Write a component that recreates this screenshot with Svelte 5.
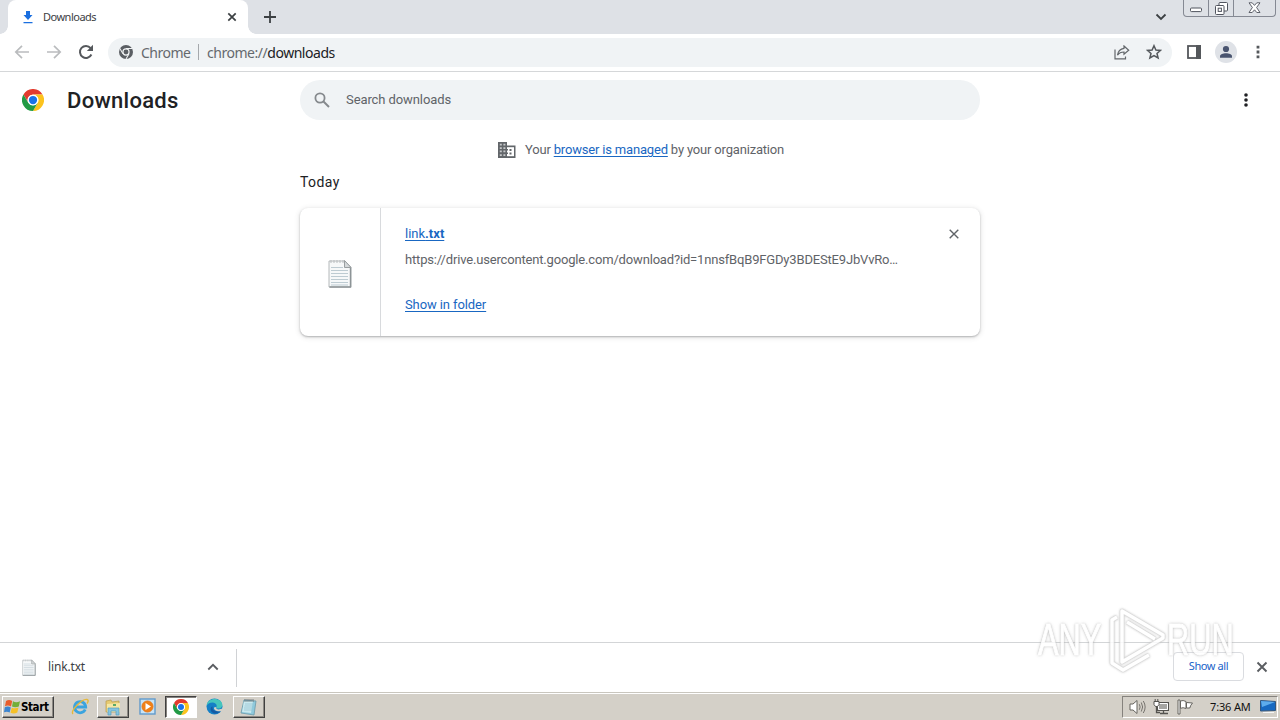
<script>
  const url = 'https://drive.usercontent.google.com/download?id=1nnsfBqB9FGDy3BDEStE9JbVvRo…';
</script>

{#snippet chrome(size)}
  <svg width={size} height={size} viewBox="0 0 48 48">
    <circle cx="24" cy="24" r="24" fill="#fff" />
    <path d="M3.2 12A24 24 0 0 1 44.8 12L24 12A12 12 0 0 0 13.6 30Z" fill="#e33b2e" />
    <path d="M44.8 12A24 24 0 0 1 24 48L34.4 30A12 12 0 0 0 24 12Z" fill="#fcc31e" />
    <path d="M3.2 12A24 24 0 0 0 24 48L34.4 30A12 12 0 0 1 13.6 30Z" fill="#229a45" />
    <circle cx="24" cy="24" r="11.5" fill="#fff" />
    <circle cx="24" cy="24" r="9" fill="#1a73e8" />
  </svg>
{/snippet}

{#snippet note(w, h)}
  <svg width={w} height={h} viewBox="0 0 24 29">
    <path d="M1 2H17L23 8V28H1Z" fill="#f6f8f9" stroke="#b4b8ba" />
    <path d="M22.5 9V28H1.5" fill="none" stroke="#8d9497" stroke-width="1.4" />
    <path d="M16.5 1.5V8.5H23Z" fill="#d4d8da" stroke="#999ea0" />
    <path d="M3 1V4M6 1V4M9 1V4M12 1V4M15 1V4" stroke="#b9bdc0" />
    <path d="M3 8.5H15M3 11.5H20M3 14.5H20M3 17.5H20M3 20.5H20M3 23.5H20M3 26H20" stroke="#bdcbd2" />
  </svg>
{/snippet}

<div class="screen">
  <div class="tabs">
    <div class="tab">
      <svg class="dl" width="12" height="13" viewBox="0 0 12 13"><path d="M4 0H8V4H10.5L6 9L1.5 4H4ZM1.5 11H10.5V12.3H1.5Z" fill="#1a6fe0" /></svg>
      <span class="tabname">Downloads</span>
      <svg width="10" height="10" viewBox="0 0 10 10"><path d="M1.3 1.3L8.7 8.7M8.7 1.3L1.3 8.7" stroke="#3c4043" stroke-width="1.7" /></svg>
    </div>
    <svg class="plus" width="12" height="12" viewBox="0 0 12 12"><path d="M6 0V12M0 6H12" stroke="#3c4043" stroke-width="1.8" /></svg>
    <svg class="drop" width="12" height="8" viewBox="0 0 12 8"><path d="M1.5 1.5L6 6L10.5 1.5" fill="none" stroke="#3c4043" stroke-width="1.8" /></svg>
    <div class="window">
      <span><svg width="12" height="6" viewBox="0 0 12 6"><rect x=".5" y="1" width="11" height="3.6" rx="1" fill="#fff" stroke="#50545e" /></svg></span>
      <span><svg width="13" height="13" viewBox="0 0 13 13"><rect x="4" y=".5" width="8.5" height="8.5" rx="1" fill="#fff" stroke="#50545e" /><rect x=".5" y="3.5" width="8.5" height="9" rx="1" fill="#fff" stroke="#50545e" /><rect x="3.2" y="6.2" width="3.2" height="3.2" fill="#fff" stroke="#50545e" /></svg></span>
      <span><svg width="13" height="12" viewBox="0 0 13 12"><path d="M1 .8H4.2L6.5 3.4L8.8 .8H12L8.6 5.5L12 10.5H8.8L6.5 7.8L4.2 10.5H1L4.4 5.5Z" fill="#fff" stroke="#50545e" stroke-width=".9" /></svg></span>
    </div>
  </div>

  <div class="toolbar">
    <svg class="back" width="16" height="16" viewBox="0 0 16 16"><path d="M15 8H2M8 1.8L1.8 8L8 14.2" fill="none" stroke="#babcbe" stroke-width="1.7" /></svg>
    <svg class="fwd" width="16" height="16" viewBox="0 0 16 16"><path d="M1 8H14M8 1.8L14.2 8L8 14.2" fill="none" stroke="#babcbe" stroke-width="1.7" /></svg>
    <svg class="reload" width="16" height="16" viewBox="0 0 16 16"><path d="M13.4 10.5A6 6 0 1 1 12.6 4.1" fill="none" stroke="#55585c" stroke-width="2" /><path d="M15 .8V7H8.8Z" fill="#55585c" /></svg>
    <div class="omni">
      <svg width="14" height="14" viewBox="0 0 48 48"><circle cx="24" cy="24" r="24" fill="#5a5e63" /><circle cx="24" cy="24" r="10.5" fill="none" stroke="#f1f3f4" stroke-width="4" /><path d="M24 12H46M13.6 30L3 12M34.4 30L24 48" stroke="#f1f3f4" stroke-width="3.5" /></svg>
      <span class="site">Chrome</span>
      <i></i>
      <span class="addr">chrome://<b>downloads</b></span>
      <svg class="share" width="16" height="15" viewBox="0 0 16 15"><path d="M1 4.5V13.8H11.5V11.5M10 1L14.7 5.2L10 9.3V7C7 7 5 8 3.5 10.2C4 6.5 6 3.8 10 3.3Z" fill="none" stroke="#62666a" stroke-width="1.2" /></svg>
      <svg width="16" height="16" viewBox="0 0 16 16"><path d="M8 1.7L9.9 6L14.5 6.4L11 9.5L12.1 14L8 11.6L3.9 14L5 9.5L1.5 6.4L6.1 6Z" fill="none" stroke="#54585c" stroke-width="1.5" /></svg>
    </div>
    <svg class="panel" width="14" height="14" viewBox="0 0 14 14"><rect x="1" y="1" width="12" height="12" fill="#fff" stroke="#54575b" stroke-width="1.8" /><path d="M9 0H14V14H9Z" fill="#54575b" /></svg>
    <svg class="avatar" width="22" height="22" viewBox="0 0 22 22"><circle cx="11" cy="11" r="11" fill="#dfe2e7" /><circle cx="11" cy="8" r="3.1" fill="#49546f" /><path d="M5 16.7V15.2C5 11.3 17 11.3 17 15.2V16.7Z" fill="#49546f" /></svg>
    <svg width="4" height="14" viewBox="0 0 4 14"><path d="M.6 .8h2.8v2.8H.6ZM.6 5.6h2.8v2.8H.6ZM.6 10.4h2.8v2.8H.6Z" fill="#55585c" /></svg>
  </div>

  <main>
    <header>
      {@render chrome(22)}
      <h1>Downloads</h1>
      <div class="search">
        <svg width="16" height="16" viewBox="0 0 16 16"><circle cx="6" cy="6" r="4.6" fill="none" stroke="#85898d" stroke-width="1.8" /><path d="M9.5 9.5L15 15" stroke="#85898d" stroke-width="2" /></svg>
        <span>Search downloads</span>
      </div>
      <svg class="more" width="4" height="14" viewBox="0 0 4 14"><circle cx="2" cy="2" r="1.8" /><circle cx="2" cy="7" r="1.8" /><circle cx="2" cy="12" r="1.8" /></svg>
    </header>
    <div class="content">
      <div class="managed">
        <svg width="18" height="16" viewBox="0 0 18 16"><path d="M0 0H9V3.4H17.5V16H0Z" fill="#62666a" /><path d="M1.8 1.8h2v1.7h-2Zm3.6 0h2v1.7h-2ZM1.8 5.2h2v1.7h-2Zm3.6 0h2v1.7h-2ZM1.8 8.6h2v1.7h-2Zm3.6 0h2v1.7h-2ZM1.8 12.3h2V14h-2Zm3.6 0h2V14h-2Z" fill="#c6c8ca" /><path d="M9 5.2h7v9H9Z" fill="#fff" /><path d="M11.5 7h2v2h-2Zm0 3.6h2v2h-2ZM9 6.9h1v1.7H9Zm0 3.5h1v1.7H9Z" fill="#62666a" /></svg>
        <span>Your <a href="#managed">browser is managed</a> by your organization</span>
      </div>
      <h2>Today</h2>
      <section class="card">
        <div class="file">{@render note(24, 29)}</div>
        <div class="details">
          <div class="top"><a class="name" href="#file">link<b>.txt</b></a>
            <svg width="10" height="10" viewBox="0 0 10 10"><path d="M.7 .7L9.3 9.3M9.3 .7L.7 9.3" stroke="#606468" stroke-width="1.4" /></svg>
          </div>
          <p>{url}</p>
          <a class="show" href="#folder">Show in folder</a>
        </div>
      </section>
    </div>
  </main>

  <footer>
    <div class="download">
      {@render note(14, 17)}
      <span>link.txt</span>
      <svg class="up" width="12" height="8" viewBox="0 0 12 8"><path d="M1.3 6.5L6 1.8L10.7 6.5" fill="none" stroke="#5a5d61" stroke-width="1.8" /></svg>
    </div>
    <button>Show all</button>
    <svg class="close" width="12" height="12" viewBox="0 0 12 12"><path d="M1.5 1.5L10.5 10.5M10.5 1.5L1.5 10.5" stroke="#5a5d61" stroke-width="1.9" /></svg>
  </footer>

  <div class="taskbar">
    <div class="start">
      <svg width="17" height="16" viewBox="0 0 17 16"><path d="M2 2Q5 0 8.2 2L7 7.4Q4 5.8 1 7.2Z" fill="#e85d2c" /><path d="M9 2.3Q12 4 16 2.3L14.8 7.4Q11.5 9 8 7.5Z" fill="#73ae38" /><path d="M.8 8.2Q4 6.8 6.8 8.4L5.7 13.5Q3 12 0 13.2Z" fill="#3c85d0" /><path d="M7.8 8.7Q11 10 14.5 8.5L13.3 13.5Q10 15.3 6.5 13.8Z" fill="#f5c027" /></svg>
      <b>Start</b>
    </div>
    <div class="app ie">
      <svg width="18" height="18" viewBox="0 0 18 18"><path d="M14.2 11.5A5.6 5.6 0 1 1 14.7 9H5" fill="none" stroke="#3ba4df" stroke-width="2.8" /><path d="M2 16C-1 13 11 .5 16 1.5C18 2 17 4 16 5.5" fill="none" stroke="#e5b83a" stroke-width="1.4" /></svg>
    </div>
    <div class="app raised">
      <svg width="18" height="18" viewBox="0 0 18 18"><path d="M2 3L7 2L8 4L15 3V14H2Z" fill="#e6ca72" stroke="#b99c4b" stroke-width=".7" /><path d="M3 6L16 5V14H3Z" fill="#f6e7a4" /><path d="M4 17V10H15V17H12V13H7V17Z" fill="#85c4df" stroke="#579dbd" stroke-width=".7" /><path d="M9 6h3v2H9Z" fill="#5ba967" /></svg>
    </div>
    <div class="app media">
      <svg width="17" height="17" viewBox="0 0 17 17"><rect x="1" y="1" width="15" height="15" fill="#c7e3f6" stroke="#619acb" stroke-width="1.4" /><circle cx="8.5" cy="8.5" r="5.5" fill="#f08118" stroke="#e8791a" /><path d="M6.5 5L12 8.5L6.5 12Z" fill="#fff" /></svg>
    </div>
    <div class="app pressed">{@render chrome(16)}</div>
    <div class="app edge">
      <svg width="17" height="17" viewBox="0 0 17 17"><circle cx="8.5" cy="8.5" r="8" fill="#147fc6" /><path d="M.6 8C1 1.5 9-1 14 2.6C17 5 17 9 14.5 10.2C12.5 11 10 10.5 10.3 9.3C11.8 6.5 9 4.5 6.5 4.5C3.5 4.5 1.4 6 .6 8Z" fill="#45c5bd" /><path d="M6.7 8.5C5.5 12 9 14.5 14.5 13C10 18 4 14.5 4.7 10.5C5 9 6 8.2 6.7 8.5Z" fill="#155aa3" /><path d="M10.2 9C9.5 11.3 13 12.5 16.8 10L16 13C11.5 14 7.5 12.5 8 9.5Z" fill="#d4d0c8" /></svg>
    </div>
    <div class="app raised notebook">
      <svg width="18" height="18" viewBox="0 0 18 18"><path d="M4 2L16 3L14 17L1 15Z" fill="#8fc9dc" stroke="#6b9bab" stroke-width=".8" /><path d="M4 3L13 3L11 15L2 14Z" fill="#c9e9ef" /><path d="M5 6H13M4.5 8H12.5M4 10H12M4 12H12" stroke="#8fbfcf" stroke-width=".7" /><path d="M5 1V4M7 1V4M9 1V4M11 1V4M13 1V4" stroke="#5f686c" stroke-width=".8" /></svg>
    </div>
    <div class="tray">
      <svg width="17" height="16" viewBox="0 0 17 16"><path d="M1 5H4L8 1.5V14.5L4 11H1Z" fill="#fff" stroke="#66645f" /><path d="M10.3 5.2Q12 8 10.3 10.8M12.3 3.5Q15 8 12.3 12.5M14.3 2Q18 8 14.3 14" fill="none" stroke="#77746f" /></svg>
      <svg width="17" height="16" viewBox="0 0 17 16"><rect x="4.5" y="3.5" width="11" height="8" fill="#a6a5a2" stroke="#55534f" /><path d="M5.5 4.5H14.5V10.5H5.5Z" fill="none" stroke="#fff" /><path d="M7 14.5H15M10.5 12V14M3.5 7V13.5H7" stroke="#55534f" fill="none" stroke-width="1.3" /><path d="M1 2.5H6V5.5L4.5 7.5H2.5L1 5.5ZM2.2 0V2.5M4.8 0V2.5" fill="#fff" stroke="#55534f" /></svg>
      <svg width="17" height="16" viewBox="0 0 17 16"><path d="M1 1H3V15H1ZM3.5 2Q6 .8 9 2.5V9.5Q6 8 3.5 9.3ZM9.5 3.5L15.5 4Q13.5 6 12.8 9H9.5Z" fill="#fff" stroke="#66645f" /></svg>
      <span>7:36 AM</span>
      <svg class="desktop" width="16" height="14" viewBox="0 0 16 14"><path d="M.5 .5L15.5 1.5V10.5L.5 11Z" fill="#1769c1" stroke="#31567f" /><path d="M1 1L15 2L2 7Z" fill="#5daced" /><path d="M3 12.5H14" stroke="#f5f5f5" /></svg>
    </div>
  </div>

  <div class="watermark">
    <span class="any">ANY</span>
    <svg width="60" height="66" viewBox="0 0 60 66">
      <g fill="none" stroke-linejoin="round">
        <path d="M20 15L48 32M15 4L56 28V31L15 55ZM10 10L5 13V56L16 63L42 48" stroke="#d6d6d6" stroke-width="4.6" />
        <path d="M20 15L48 32M15 4L56 28V31L15 55ZM10 10L5 13V56L16 63L42 48" stroke="#fff" stroke-width="3.4" />
      </g>
    </svg>
    <span class="run">RUN</span>
  </div>
</div>

<style>
  :global(body) { margin: 0; background: #fff; }
  * { box-sizing: border-box; }
  svg { flex: none; display: block; }
  .screen { position: relative; width: 1280px; height: 720px; overflow: hidden; display: flex; flex-direction: column; background: #fff; font-family: Roboto, sans-serif; color: #202124; white-space: nowrap; }
  .tabs { height: 34px; flex: none; display: flex; background: #dee1e6; padding-left: 8px; font-family: "Noto Sans", sans-serif; }
  .tab { position: relative; width: 240px; display: flex; align-items: center; padding: 0 11px 0 14px; background: #fff; border-radius: 8px 8px 0 0; font-size: 11px; letter-spacing: -.5px; color: #3c4043; }
  .tab::before, .tab::after { content: ""; position: absolute; bottom: 0; width: 8px; height: 8px; }
  .tab::before { left: -8px; background: radial-gradient(circle at 0 0, transparent 7.5px, #fff 8px); }
  .tab::after { right: -8px; background: radial-gradient(circle at 100% 0, transparent 7.5px, #fff 8px); }
  .tabname { margin-left: 9px; flex: 1; padding-bottom: 1px; }
  .plus { margin: 11px 0 0 16px; }
  .drop { margin: 13px 16px 0 auto; }
  .window { display: flex; width: 93px; height: 17px; margin-right: 4px; border: 1px solid #858993; border-top: 0; border-radius: 0 0 4px 4px; }
  .window span { display: flex; align-items: center; justify-content: center; width: 25px; border-right: 1px solid #858993; }
  .window span:first-child { align-items: end; padding-bottom: 3px; }
  .window span:last-child { flex: 1; border: 0; }
  .toolbar { height: 38px; flex: none; display: flex; align-items: center; padding: 0 20px 1px 14px; border-bottom: 1px solid #d5d7d9; }
  .fwd { margin-left: 16px; }
  .reload { margin-left: 16px; }
  .omni { height: 29px; width: 1064px; flex: none; margin-left: 14px; border-radius: 15px; background: #f0f3f5; display: flex; align-items: center; padding: 0 10px 0 11px; font: 14px "Noto Sans", sans-serif; color: #65696e; }
  .site { margin-left: 8px; width: 50px; letter-spacing: -.5px; }
  .omni i { width: 1px; height: 16px; background: #a5a8ac; margin: 0 8px 0 7px; }
  .addr { letter-spacing: -.47px; }
  .addr b { font-weight: 400; color: #202124; }
  .share { margin: 0 16px 0 auto; }
  .panel { margin-left: 15px; }
  .avatar { margin: 0 19px 0 14px; }
  main { height: 570px; flex: none; }
  header { height: 56px; display: flex; align-items: center; padding: 0 32px 0 22px; }
  h1 { margin: 0 0 0 23px; width: 233px; font-size: 22px; font-weight: 500; letter-spacing: .27px; }
  .search { width: 680px; height: 40px; border-radius: 20px; background: #f0f3f5; display: flex; align-items: center; gap: 16px; padding-left: 14px; font-size: 13px; letter-spacing: -.09px; color: #5f6368; }
  .search span { padding-bottom: 2px; }
  .more { margin-left: auto; fill: #202124; }
  .content { width: 680px; margin: 0 auto; }
  .managed { height: 43px; display: flex; align-items: center; padding-left: 198px; gap: 9px; font-size: 13px; letter-spacing: -.18px; color: #5f6368; }
  a { color: #1967c2; text-decoration-thickness: 1px; text-underline-offset: 2px; }
  h2 { height: 37px; margin: 0; padding-top: 3px; font-size: 14px; line-height: 17px; font-weight: 400; letter-spacing: .4px; }
  .card { height: 128px; display: flex; border-radius: 8px; box-shadow: 0 1px 2px #3c404355, 0 1px 5px 1px #3c404320; }
  .file { width: 81px; border-right: 1px solid #d8dadd; display: flex; align-items: center; justify-content: center; padding-top: 3px; }
  .details { flex: 1; padding: 17px 21px 0 24px; font-size: 13px; line-height: 18px; }
  .top { display: flex; align-items: center; justify-content: space-between; }
  .name b { font-weight: 700; }
  .details p { margin: 8px 0 27px; letter-spacing: -.17px; color: #5f6368; }
  .show { letter-spacing: -.1px; }
  footer { height: 50px; flex: none; display: flex; align-items: center; border-top: 1px solid #d3d5d7; padding-right: 12px; font-family: "Noto Sans", sans-serif; }
  .download { display: flex; align-items: center; width: 237px; height: 38px; padding: 0 17px 0 22px; border-right: 1px solid #d0d2d5; font-size: 12px; letter-spacing: -.15px; color: #3c4043; }
  .download span { flex: 1; margin-left: 12px; padding-bottom: 2px; }
  .up, .close { margin-bottom: 2px; }
  button { width: 71px; height: 29px; margin: 0 12px 2px auto; padding: 0 0 2px; background: #fff; border: 1px solid #dadce0; border-radius: 4px; color: #1a63c9; font: 11px "Noto Sans", sans-serif; letter-spacing: -.42px; }
  .taskbar { height: 28px; flex: none; display: flex; align-items: center; padding: 2px; background: #d4d0c8; border-top: 1px solid #c9c6be; box-shadow: inset 0 1px #fff; }
  .start, .raised { border: 1px solid; border-color: #fff #404040 #404040 #fff; box-shadow: inset -1px -1px #8d8a85; }
  .start { width: 52px; height: 22px; display: flex; align-items: center; padding-left: 1px; font: 11.5px "DejaVu Sans Condensed", "DejaVu Sans", sans-serif; font-stretch: condensed; color: #000; }
  .start b { letter-spacing: -.4px; }
  .app { width: 32px; height: 22px; display: flex; align-items: center; justify-content: center; }
  .ie { margin-left: 10px; }
  .raised { margin-left: 1px; }
  .media { margin-left: 2px; }
  .pressed { margin-left: 2px; background: #fff; border: 1px solid; border-color: #404040 #fff #fff #404040; box-shadow: inset 1px 1px #85827e; }
  .edge { margin-left: 1px; }
  .notebook { margin-left: 3px; }
  .tray { width: 156px; height: 22px; margin-left: auto; display: flex; align-items: center; gap: 7px; padding-left: 6px; border: 1px solid; border-color: #85827d #fff #fff #85827d; font: 11px "Noto Sans", sans-serif; letter-spacing: -.15px; color: #111; }
  .tray span { margin-left: 9px; width: 43px; }
  .watermark { position: absolute; left: 1038px; top: 607px; display: flex; align-items: center; opacity: .85; pointer-events: none; font: 44px/60px "Liberation Sans", sans-serif; color: #fff; text-shadow: 0 0 2px #aaa, 0 0 4px #aaa; }
  .watermark span { display: block; width: 66px; }
  .watermark svg { margin-left: 3px; filter: drop-shadow(0 0 1px #bbb); overflow: visible; }
  .any, .run { transform: scaleX(.7); transform-origin: left center; -webkit-text-stroke: 1px #fff; }
</style>
